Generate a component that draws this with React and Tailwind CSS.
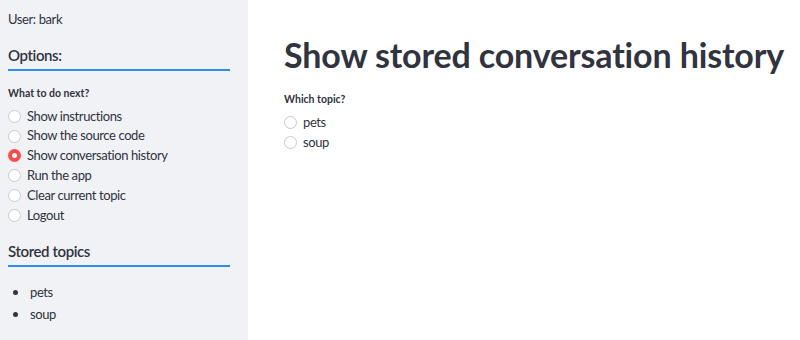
import React from "react";

const options = [
  "Show instructions",
  "Show the source code",
  "Show conversation history",
  "Run the app",
  "Clear current topic",
  "Logout",
];

function Radio({ checked, label }) {
  return (
    <label className="flex items-center gap-[6px] h-[19.8px]">
      {checked ? (
        <span className="w-[13px] h-[13px] rounded-full bg-[#ff4b4b] flex items-center justify-center">
          <span className="w-[5px] h-[5px] rounded-full bg-white" />
        </span>
      ) : (
        <span className="w-[13px] h-[13px] rounded-full border border-[#c8cad0] bg-white" />
      )}
      <span>{label}</span>
    </label>
  );
}

function SectionTitle({ children }) {
  return (
    <div className="mr-[18px]">
      <h3 className="text-[15px] font-semibold pb-[2px] border-b-2 border-[#2c8df5]">
        {children}
      </h3>
    </div>
  );
}

export default function App() {
  return (
    <div
      className="flex w-[800px] h-[340px] text-[#31333f] overflow-hidden tracking-[-0.4px]"
      style={{ fontFamily: "Lato, 'Noto Sans', sans-serif" }}
    >
      <aside className="w-[248px] shrink-0 bg-[#f0f2f6] pl-[8px] pt-[10px] text-[13px]">
        <p className="leading-[18px]">User: bark</p>
        <div className="mt-[16px]">
          <SectionTitle>Options:</SectionTitle>
        </div>
        <p className="mt-[15px] text-[10.5px] font-bold leading-[14px] tracking-normal">What to do next?</p>
        <div className="mt-[7px] flex flex-col">
          {options.map((o) => (
            <Radio key={o} label={o} checked={o === "Show conversation history"} />
          ))}
        </div>
        <div className="mt-[15px]">
          <SectionTitle>Stored topics</SectionTitle>
        </div>
        <ul className="mt-[17px] flex flex-col gap-[4px]">
          {["pets", "soup"].map((t) => (
            <li key={t} className="flex items-center h-[18px]">
              <span className="w-[5px] h-[5px] rounded-full bg-[#31333f] ml-[5px] mr-[12px]" />
              {t}
            </li>
          ))}
        </ul>
      </aside>
      <main className="flex-1 bg-white pl-[36px] pt-[33px] text-[13px] whitespace-nowrap">
        <h1 className="text-[34px] font-bold leading-[44px] tracking-[-0.15px]">
          Show stored conversation history
        </h1>
        <p className="mt-[15px] text-[10.5px] font-bold leading-[14px] tracking-normal">Which topic?</p>
        <div className="mt-[7px] flex flex-col">
          <Radio label="pets" />
          <Radio label="soup" />
        </div>
      </main>
    </div>
  );
}
